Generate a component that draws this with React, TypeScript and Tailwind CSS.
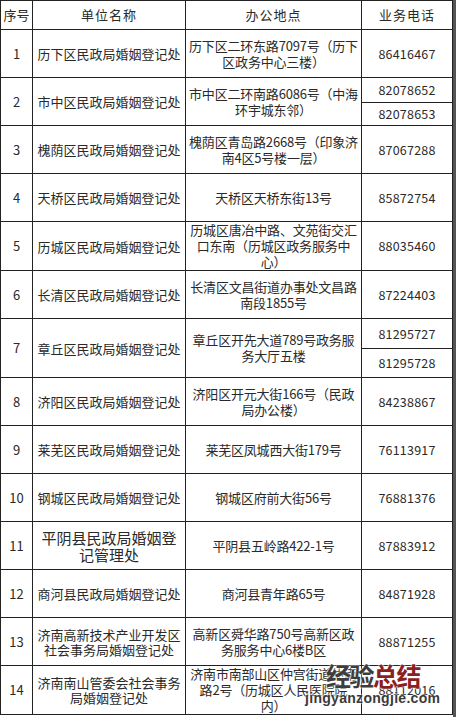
import React from 'react'

type Row = {
  n: string
  name: string[]
  addr: string[]
  phones: string[]
  h: number[]
  big?: boolean
}

const rows: Row[] = [
  { n: '1', name: ['历下区民政局婚姻登记处'], addr: ['历下区二环东路7097号（历下', '区政务中心三楼）'], phones: ['86416467'], h: [48] },
  { n: '2', name: ['市中区民政局婚姻登记处'], addr: ['市中区二环南路6086号（中海', '环宇城东邻）'], phones: ['82078652', '82078653'], h: [25, 23] },
  { n: '3', name: ['槐荫区民政局婚姻登记处'], addr: ['槐荫区青岛路2668号（印象济', '南4区5号楼一层）'], phones: ['87067288'], h: [48] },
  { n: '4', name: ['天桥区民政局婚姻登记处'], addr: ['天桥区天桥东街13号'], phones: ['85872754'], h: [48] },
  { n: '5', name: ['历城区民政局婚姻登记处'], addr: ['历城区唐冶中路、文苑街交汇', '口东南（历城区政务服务中', '心）'], phones: ['88035460'], h: [48] },
  { n: '6', name: ['长清区民政局婚姻登记处'], addr: ['长清区文昌街道办事处文昌路', '南段1855号'], phones: ['87224403'], h: [48] },
  { n: '7', name: ['章丘区民政局婚姻登记处'], addr: ['章丘区开先大道789号政务服', '务大厅五楼'], phones: ['81295727', '81295728'], h: [30, 29] },
  { n: '8', name: ['济阳区民政局婚姻登记处'], addr: ['济阳区开元大街166号（民政', '局办公楼）'], phones: ['84238867'], h: [48] },
  { n: '9', name: ['莱芜区民政局婚姻登记处'], addr: ['莱芜区凤城西大街179号'], phones: ['76113917'], h: [48] },
  { n: '10', name: ['钢城区民政局婚姻登记处'], addr: ['钢城区府前大街56号'], phones: ['76881376'], h: [48] },
  { n: '11', name: ['平阴县民政局婚姻登', '记管理处'], addr: ['平阴县五岭路422-1号'], phones: ['87883912'], h: [48], big: true },
  { n: '12', name: ['商河县民政局婚姻登记处'], addr: ['商河县青年路65号'], phones: ['84871928'], h: [48] },
  { n: '13', name: ['济南高新技术产业开发区', '社会事务局婚姻登记处'], addr: ['高新区舜华路750号高新区政', '务服务中心6楼B区'], phones: ['88871255'], h: [48] },
  { n: '14', name: ['济南南山管委会社会事务', '局婚姻登记处'], addr: ['济南市南部山区仲宫街道仲南', '路2号（历城区人民医院院', '内）'], phones: ['88112016'], h: [48] },
]

const td = 'border border-[#222] text-center align-middle p-0'

function Lines({ lines, cls }: { lines: string[]; cls: string }) {
  return (
    <div className={cls}>
      {lines.map((l, i) => (
        <div key={i} className="whitespace-nowrap">{l}</div>
      ))}
    </div>
  )
}

export default function App() {
  return (
    <div className="relative w-[456px] h-[717px] bg-white overflow-hidden font-['Noto_Sans_CJK_SC',sans-serif] text-[#2a2a2a]">
      <div className="absolute right-0 top-0 h-full w-[3px] bg-[#555]" />
      <table className="border-collapse table-fixed w-[452px] text-[13px]">
        <colgroup>
          <col className="w-[32px]" />
          <col className="w-[153px]" />
          <col className="w-[176px]" />
          <col className="w-[91px]" />
        </colgroup>
        <tbody>
          <tr className="h-[29px]">
            <td className={td}>序号</td>
            <td className={td}><span className="tracking-[1px]">单位名称</span></td>
            <td className={td}><span className="tracking-[1px]">办公地点</span></td>
            <td className={td}><span className="tracking-[1px]">业务电话</span></td>
          </tr>
          {rows.map((r) => {
            const span = r.phones.length
            return (
              <React.Fragment key={r.n}>
                <tr style={{ height: r.h[0] }}>
                  <td rowSpan={span} className={td}>{r.n}</td>
                  <td rowSpan={span} className={td}>
                    <Lines
                      lines={r.name}
                      cls={r.big ? 'text-[15px] leading-[17px]' : 'leading-[15px]'}
                    />
                  </td>
                  <td rowSpan={span} className={td}>
                    <Lines lines={r.addr} cls="leading-[16px] tracking-[-0.2px]" />
                  </td>
                  <td className={td}>
                    <span className="text-[12.5px] tracking-[0.2px]">{r.phones[0]}</span>
                  </td>
                </tr>
                {span > 1 && (
                  <tr style={{ height: r.h[1] }}>
                    <td className={td}>
                      <span className="text-[12.5px] tracking-[0.2px]">{r.phones[1]}</span>
                    </td>
                  </tr>
                )}
              </React.Fragment>
            )
          })}
        </tbody>
      </table>

      {/* watermark */}
      <div className="absolute left-[326px] top-[663px] leading-none font-bold text-[25px] tracking-[-1.5px] [text-shadow:0_0_2px_#fff,0_0_2px_#fff]">
        <span className="text-[#3d3d3d]">经验</span>
        <span className="text-[#8c1f1f]">总结</span>
      </div>
      <div className="absolute left-[305px] top-[691px] leading-none font-bold text-[14px] text-[#3a3a3a] font-['Liberation_Sans',sans-serif] tracking-[0.3px] [text-shadow:0_0_2px_#fff,0_0_2px_#fff]">
        jingyanzongjie.com
      </div>
    </div>
  )
}
